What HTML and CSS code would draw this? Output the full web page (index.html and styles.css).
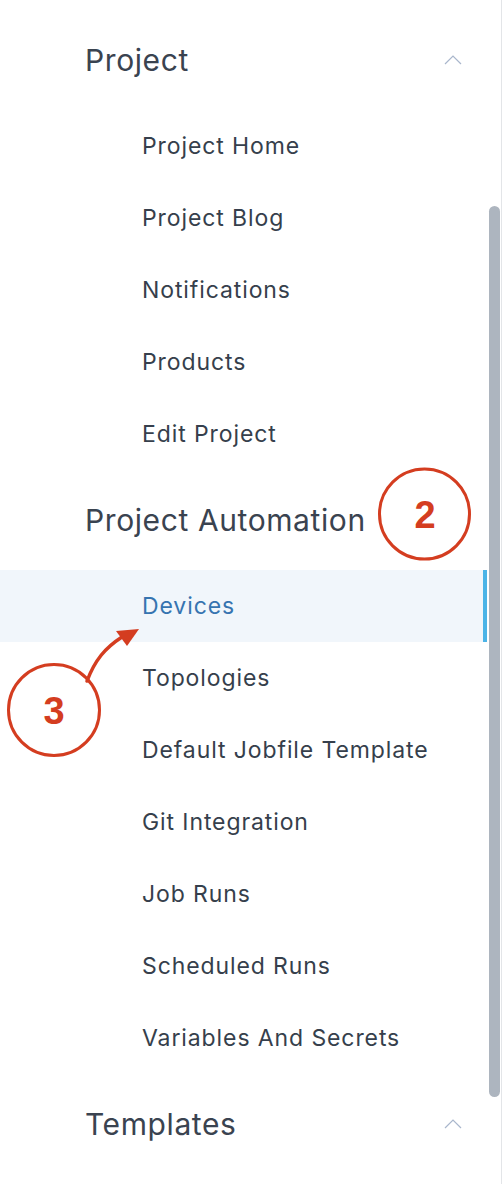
FILE: index.html
```html
<!DOCTYPE html>
<html>
<head>
<meta charset="utf-8">
<link rel="stylesheet" href="styles.css">
</head>
<body>
<div class="frame">
  <nav class="sidebar">
    <div class="group">
      <div class="group-head">
        <span class="group-title">Project</span>
        <svg class="chev" width="18" height="10" viewBox="0 0 18 10"><path d="M1 9 L9 1 L17 9" fill="none" stroke="#a9b6cc" stroke-width="1.2"/></svg>
      </div>
      <a class="item">Project Home</a>
      <a class="item">Project Blog</a>
      <a class="item">Notifications</a>
      <a class="item">Products</a>
      <a class="item">Edit Project</a>
    </div>
    <div class="group">
      <div class="group-head">
        <span class="group-title">Project Automation</span>
      </div>
      <a class="item active">Devices</a>
      <a class="item">Topologies</a>
      <a class="item">Default Jobfile Template</a>
      <a class="item">Git Integration</a>
      <a class="item">Job Runs</a>
      <a class="item">Scheduled Runs</a>
      <a class="item">Variables And Secrets</a>
    </div>
    <div class="group">
      <div class="group-head">
        <span class="group-title">Templates</span>
        <svg class="chev" width="18" height="10" viewBox="0 0 18 10"><path d="M1 9 L9 1 L17 9" fill="none" stroke="#a9b6cc" stroke-width="1.2"/></svg>
      </div>
    </div>
  </nav>
  <div class="track"><div class="thumb"></div></div>

  <svg class="annot" width="502" height="1184" viewBox="0 0 502 1184">
    <circle cx="424.5" cy="514" r="45" fill="none" stroke="#d43d20" stroke-width="3"/>
    <text x="425" y="528" text-anchor="middle" class="num">2</text>
    <circle cx="54" cy="710" r="45.5" fill="none" stroke="#d43d20" stroke-width="3"/>
    <text x="54" y="724" text-anchor="middle" class="num">3</text>
    <path d="M87 681 C 95 660, 105 648, 122 637" fill="none" stroke="#d43d20" stroke-width="3.5" stroke-linecap="round"/>
    <path d="M139 629 L116 631 L127 646 Z" fill="#d43d20"/>
  </svg>
</div>
</body>
</html>
```

FILE: styles.css
```css
html, body {
  margin: 0;
  padding: 0;
  background: #ffffff;
}
body {
  font-family: "Inter", "Liberation Sans", sans-serif;
  color: #39424f;
}
.frame {
  position: relative;
  width: 502px;
  height: 1184px;
  display: flex;
  overflow: hidden;
}
.sidebar {
  flex: 1;
  display: flex;
  flex-direction: column;
  padding-top: 10px;
}
.group {
  display: flex;
  flex-direction: column;
}
.group-head {
  height: 100px;
  display: flex;
  align-items: center;
  justify-content: space-between;
  padding-left: 85px;
  padding-right: 25px;
}
.group-title {
  font-size: 30px;
  font-weight: 400;
  color: #3a4350;
  letter-spacing: 0.6px;
}
.chev {
  display: block;
}
.item {
  height: 72px;
  display: flex;
  align-items: center;
  padding-left: 142px;
  font-size: 23px;
  color: #363f4c;
  letter-spacing: 0.9px;
}
.item.active {
  background: #f1f6fb;
  color: #3674b0;
  box-shadow: inset -4px 0 0 #4cb4e7;
}
.track {
  width: 14px;
  border-right: 1px solid #e3e5e8;
  display: flex;
  justify-content: center;
}
.thumb {
  margin-top: 206px;
  width: 11px;
  height: 891px;
  border-radius: 6px;
  background: #adb5bf;
}
.annot {
  position: absolute;
  left: 0;
  top: 0;
  pointer-events: none;
}
.num {
  font-family: "Liberation Sans", Arial, sans-serif;
  font-weight: 700;
  font-size: 38px;
  fill: #d43d20;
}
```
